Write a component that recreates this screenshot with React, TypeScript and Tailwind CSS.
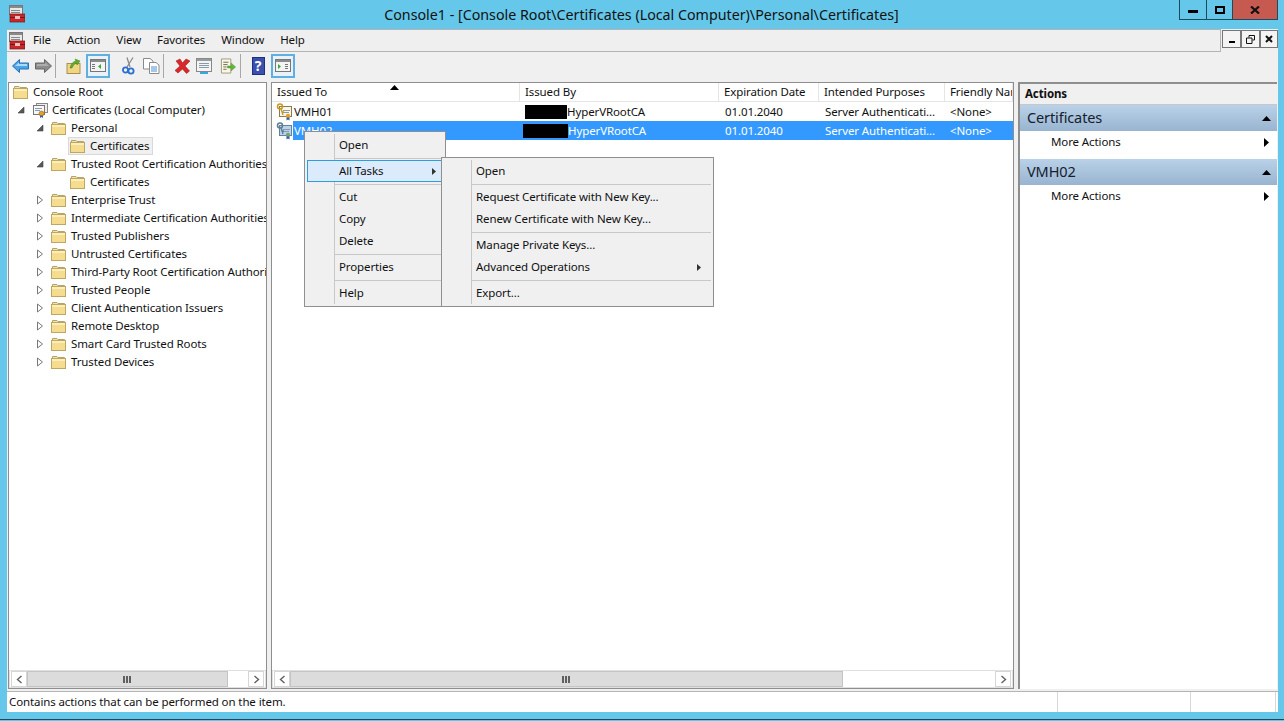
import type { ReactNode } from "react";

const treeRows = [
  { label: "Console Root", level: 0, arrow: "", icon: "folder" },
  { label: "Certificates (Local Computer)", level: 1, arrow: "open", icon: "cert" },
  { label: "Personal", level: 2, arrow: "open", icon: "folder" },
  { label: "Certificates", level: 3, arrow: "", icon: "folder", selected: true },
  { label: "Trusted Root Certification Authorities", level: 2, arrow: "open", icon: "folder" },
  { label: "Certificates", level: 3, arrow: "", icon: "folder" },
  { label: "Enterprise Trust", level: 2, arrow: "closed", icon: "folder" },
  { label: "Intermediate Certification Authorities", level: 2, arrow: "closed", icon: "folder" },
  { label: "Trusted Publishers", level: 2, arrow: "closed", icon: "folder" },
  { label: "Untrusted Certificates", level: 2, arrow: "closed", icon: "folder" },
  { label: "Third-Party Root Certification Authorities", level: 2, arrow: "closed", icon: "folder" },
  { label: "Trusted People", level: 2, arrow: "closed", icon: "folder" },
  { label: "Client Authentication Issuers", level: 2, arrow: "closed", icon: "folder" },
  { label: "Remote Desktop", level: 2, arrow: "closed", icon: "folder" },
  { label: "Smart Card Trusted Roots", level: 2, arrow: "closed", icon: "folder" },
  { label: "Trusted Devices", level: 2, arrow: "closed", icon: "folder" },
];

const menuItems = ["File", "Action", "View", "Favorites", "Window", "Help"];

function ToolboxIcon() {
  return (
    <svg width="16" height="18" viewBox="0 0 16 18" className="shrink-0">
      <rect x="0.5" y="0.5" width="13" height="9" fill="#e8e8e8" stroke="#777" />
      <rect x="1" y="1" width="12" height="2" fill="#8a8a8a" />
      <rect x="2" y="5" width="9" height="1" fill="#888" />
      <rect x="2" y="7" width="9" height="1" fill="#888" />
      <rect x="1" y="9" width="15" height="8" fill="#c8282a" stroke="#7c1515" strokeWidth="0.7" />
      <rect x="1" y="12" width="15" height="1" fill="#7c1515" />
      <rect x="6" y="11" width="5" height="3" fill="#eac0c0" />
    </svg>
  );
}

function FolderIcon() {
  return (
    <svg width="15" height="14" viewBox="0 0 15 14" className="shrink-0">
      <path d="M1.5 3.5V1.5H6L7 2.5H13.5V3.5Z" fill="#f3e3a8" stroke="#b5a36a" />
      <rect x="0.5" y="3.5" width="14" height="10" fill="#f6dc8f" stroke="#bda765" />
      <rect x="1" y="4" width="13" height="2" fill="#fbeebb" />
    </svg>
  );
}

function CertIcon({ size = 16, muted = false }: { size?: number; muted?: boolean }) {
  return (
    <svg width={size} height={size} viewBox="0 0 16 16" className="shrink-0">
      <rect x="4.5" y="1.5" width="11" height="9" fill="#eee" stroke="#888" />
      <rect x="1.5" y="3.5" width="11" height="9" fill={muted ? "#d5e4f2" : "#f8f8f8"} stroke="#777" />
      <rect x="3" y="6" width="7" height="1" fill="#7a9cc0" />
      <rect x="3" y="8" width="5" height="1" fill="#7a9cc0" />
      <circle cx="9.5" cy="11.5" r="2.5" fill="#e8a020" stroke="#a86a10" strokeWidth="0.6" />
      <path d="M8 13.5V16L9.5 15L11 16V13.5Z" fill="#2f5fb0" />
    </svg>
  );
}

function KeyCertIcon({ selected = false }: { selected?: boolean }) {
  return (
    <svg width="17" height="18" viewBox="0 0 17 18" className="shrink-0">
      <rect x="3.5" y="3.5" width="12" height="10" fill={selected ? "#b9d3ea" : "#fbf6e6"} stroke={selected ? "#66809a" : "#8b7a50"} />
      <rect x="7" y="7" width="7" height="1" fill="#8a9ab0" />
      <rect x="7" y="9" width="6" height="1" fill="#8a9ab0" />
      <circle cx="4" cy="3.5" r="2.5" fill="none" stroke={selected ? "#5d7f96" : "#c99a22"} strokeWidth="1.5" />
      <path d="M5 5.5L7 12M6 9H8" stroke={selected ? "#5d7f96" : "#c99a22"} strokeWidth="1.4" fill="none" />
      <circle cx="12" cy="13" r="2.2" fill={selected ? "#7f9f70" : "#e8a020"} />
      <path d="M10.5 14.5V17.5L12 16.5L13.5 17.5V14.5Z" fill="#2f5fb0" />
    </svg>
  );
}

function Expander({ kind }: { kind: string }) {
  if (kind === "open") {
    return (
      <svg width="8" height="8" viewBox="0 0 8 8">
        <path d="M7 1V7H1Z" fill="#595959" stroke="#444" strokeWidth="0.6" />
      </svg>
    );
  }
  if (kind === "closed") {
    return (
      <svg width="8" height="10" viewBox="0 0 8 10">
        <path d="M1.5 1L6.5 5L1.5 9Z" fill="#fff" stroke="#777" />
      </svg>
    );
  }
  return null;
}

function TreeRow({ label, level, arrow, icon, selected }: {
  label: string;
  level: number;
  arrow: string;
  icon: string;
  selected?: boolean;
}) {
  return (
    <div className="flex h-[18px] items-center whitespace-nowrap" style={{ paddingLeft: 2 + Math.max(level - 1, 0) * 19 }}>
      {level > 0 ? (
        <span className="flex w-[19px] shrink-0 items-center justify-center">
          <Expander kind={arrow} />
        </span>
      ) : null}
      <span
        className={`flex h-[18px] shrink-0 items-center border pl-[1px] pr-[3px] ${
          selected ? "border-[#d9d9d9] bg-[#f0f0f0]" : "border-transparent"
        } ${icon === "cert" ? "gap-[4px]" : "gap-[5px]"}`}
      >
        {icon === "cert" ? <CertIcon /> : <FolderIcon />}
        <span>{label}</span>
      </span>
    </div>
  );
}

function ScrollArrow({ right = false }: { right?: boolean }) {
  return (
    <span className="flex h-[16px] w-[16px] shrink-0 items-center justify-center border border-[#d6d6d6] bg-white">
      <svg width="7" height="9" viewBox="0 0 7 9">
        <path d={right ? "M1.5 1L5.5 4.5L1.5 8" : "M5.5 1L1.5 4.5L5.5 8"} fill="none" stroke="#606060" strokeWidth="1.4" />
      </svg>
    </span>
  );
}

function Grip() {
  return (
    <span className="flex -translate-x-[1px] gap-[1px]">
      <span className="h-[7px] w-[2px] bg-[#606060]" />
      <span className="h-[7px] w-[2px] bg-[#606060]" />
      <span className="h-[7px] w-[2px] bg-[#606060]" />
    </span>
  );
}

function HScrollBar({ thumb }: { thumb: string }) {
  return (
    <div className="flex h-[18px] shrink-0 items-center border border-[#e0e0e0] bg-white px-[1px]">
      <ScrollArrow />
      <div className="flex h-[16px] min-w-0 flex-1">
        <div className={`${thumb} flex h-full items-center justify-center border border-[#c4c4c4] bg-[#dcdcdc]`}>
          <Grip />
        </div>
      </div>
      <ScrollArrow right />
    </div>
  );
}

function ToolSlot({ width, active, children }: { width: string; active?: boolean; children: ReactNode }) {
  return (
    <span
      className={`${width} flex h-[24px] shrink-0 items-center justify-center ${
        active ? "border-2 border-[#5fb0e0] bg-[#e9f2fa]" : ""
      }`}
    >
      {children}
    </span>
  );
}

function ToolSep() {
  return <span className="h-[24px] w-[1px] shrink-0 bg-[#a8a8a8]" />;
}

function Toolbar() {
  return (
    <div className="flex h-[30px] shrink-0 items-center bg-[#f0f0f0] pb-[3px] pl-[2px]">
      <ToolSlot width="w-[22px]">
        <svg width="17" height="14" viewBox="0 0 17 14">
          <path d="M7.5 0.5L0.5 7L7.5 13.5V10H16.5V4H7.5Z" fill="#4aa4e8" stroke="#2a70b0" />
          <path d="M3 7L7 3.5V5H15V7Z" fill="#a6dcff" />
        </svg>
      </ToolSlot>
      <ToolSlot width="w-[24px]">
        <svg width="17" height="14" viewBox="0 0 17 14">
          <path d="M9.5 0.5L16.5 7L9.5 13.5V10H0.5V4H9.5Z" fill="#8c8c8c" stroke="#666" />
          <path d="M2 5H10V3.5L14 7H2Z" fill="#adadad" />
        </svg>
      </ToolSlot>
      <ToolSep />
      <span className="w-[9px] shrink-0" />
      <ToolSlot width="w-[18px]">
        <svg width="16" height="16" viewBox="0 0 16 16">
          <rect x="1" y="5.5" width="13" height="10" fill="#f2d583" stroke="#a89050" />
          <path d="M4 10C5 6 7 3.5 10 3L9 1L14 3L11 7L10.5 5C8.5 5.5 7 7.5 6 10Z" fill="#5fae2c" stroke="#3d7a18" strokeWidth="0.5" />
        </svg>
      </ToolSlot>
      <span className="w-[3px] shrink-0" />
      <ToolSlot width="w-[24px]" active>
        <svg width="16" height="13" viewBox="0 0 16 13">
          <rect x="0.5" y="0.5" width="15" height="12" fill="#f4f4f4" stroke="#777" />
          <rect x="1" y="1" width="14" height="2" fill="#8b8b8b" />
          <rect x="2" y="5" width="3" height="1" fill="#777" />
          <rect x="2" y="7" width="3" height="1" fill="#777" />
          <rect x="2" y="9" width="3" height="1" fill="#777" />
          <path d="M11 5V10L8 7.5Z" fill="#3aa83a" />
        </svg>
      </ToolSlot>
      <span className="w-[8px] shrink-0" />
      <ToolSlot width="w-[20px]">
        <svg width="13" height="18" viewBox="0 0 13 18">
          <path d="M11 0.5L5 10M5 0.5L8 10" stroke="#8a8a8a" strokeWidth="1.3" fill="none" />
          <circle cx="3.5" cy="13" r="2.6" fill="none" stroke="#2a70d0" strokeWidth="1.8" />
          <circle cx="9" cy="14" r="2.6" fill="none" stroke="#2a70d0" strokeWidth="1.8" />
        </svg>
      </ToolSlot>
      <span className="w-[3px] shrink-0" />
      <ToolSlot width="w-[20px]">
        <svg width="17" height="16" viewBox="0 0 17 16">
          <path d="M0.5 0.5H7L10 3V11H0.5Z" fill="#fff" stroke="#8a8a8a" />
          <path d="M6.5 4.5H13L16 7V15.5H6.5Z" fill="#fff" stroke="#8a8a8a" />
          <path d="M8 9H14M8 11H14M8 13H14" stroke="#4a90d0" />
        </svg>
      </ToolSlot>
      <span className="w-[2px] shrink-0" />
      <ToolSep />
      <span className="w-[8px] shrink-0" />
      <ToolSlot width="w-[20px]">
        <svg width="17" height="16" viewBox="0 0 17 16">
          <path d="M2 3L6 1L8.5 5L12 1L16 3L11 8L15.5 13L12.5 15.5L8.5 11L4 15L1 12.5L6 8Z" fill="#d8282a" stroke="#a81c1e" strokeWidth="0.6" />
        </svg>
      </ToolSlot>
      <span className="w-[4px] shrink-0" />
      <ToolSlot width="w-[16px]">
        <svg width="16" height="16" viewBox="0 0 16 16">
          <rect x="0.5" y="0.5" width="15" height="13" fill="#f4f4f4" stroke="#888" />
          <rect x="1" y="1" width="14" height="2" fill="#9a9a9a" />
          <path d="M3 5.5H13M3 7.5H13M3 9.5H13" stroke="#8899aa" />
          <rect x="4" y="14" width="8" height="2" fill="#3aa8e0" />
        </svg>
      </ToolSlot>
      <span className="w-[8px] shrink-0" />
      <ToolSlot width="w-[16px]">
        <svg width="17" height="16" viewBox="0 0 17 16">
          <path d="M1.5 0.5H11.5V15.5H1.5Z" fill="#fbf6df" stroke="#9a9a80" />
          <path d="M3.5 4H9M3.5 6.5H8M3.5 9H7M3.5 11.5H7" stroke="#666" />
          <path d="M8 8H12V5L16.5 9L12 13V10H8Z" fill="#62b83a" stroke="#3f8a20" strokeWidth="0.5" />
        </svg>
      </ToolSlot>
      <span className="w-[4px] shrink-0" />
      <ToolSep />
      <span className="w-[10px] shrink-0" />
      <ToolSlot width="w-[14px]">
        <span className="flex h-[18px] w-[13px] items-center justify-center border border-[#1d2f80] bg-[#3b4fb0] text-[14px] font-bold leading-none text-white">
          ?
        </span>
      </ToolSlot>
      <span className="w-[6px] shrink-0" />
      <ToolSlot width="w-[24px]" active>
        <svg width="16" height="13" viewBox="0 0 16 13">
          <rect x="0.5" y="0.5" width="15" height="12" fill="#f4f4f4" stroke="#777" />
          <rect x="1" y="1" width="14" height="2" fill="#8b8b8b" />
          <path d="M3 5V10L6 7.5Z" fill="#3aa83a" />
          <rect x="10" y="5" width="3" height="1" fill="#777" />
          <rect x="10" y="7" width="3" height="1" fill="#777" />
          <rect x="10" y="9" width="3" height="1" fill="#777" />
        </svg>
      </ToolSlot>
    </div>
  );
}

function Tri({ up = false }: { up?: boolean }) {
  return up ? (
    <svg width="9" height="5" viewBox="0 0 9 5">
      <path d="M4.5 0L9 5H0Z" fill="#000" />
    </svg>
  ) : (
    <svg width="4" height="7" viewBox="0 0 4 7">
      <path d="M0 0L4 3.5L0 7Z" fill="#333" />
    </svg>
  );
}

function ColHead({ width, children }: { width: string; children: ReactNode }) {
  return (
    <div className={`${width} relative flex h-full shrink-0 items-center overflow-hidden whitespace-nowrap border-r border-[#e5e5e5] pl-[5px]`}>
      {children}
    </div>
  );
}

function ListRow({ name, selected, blackLeft, blackWidth }: {
  name: string;
  selected?: boolean;
  blackLeft: string;
  blackWidth: string;
}) {
  const textClass = selected ? "text-white" : "text-[#111]";
  return (
    <div className="flex h-[19px] items-center whitespace-nowrap">
      <span className="flex w-[21px] shrink-0 justify-center pl-[3px]">
        <KeyCertIcon selected={selected} />
      </span>
      <div className={`flex h-full flex-1 items-center ${selected ? "bg-[#3399ff]" : ""} ${textClass}`}>
        <span className="w-[227px] shrink-0 pl-[1px]">{name}</span>
        <span className="flex w-[199px] shrink-0 items-center">
          <span className={`${blackLeft} ${blackWidth} h-[14px] shrink-0 bg-black`} />
          <span>HyperVRootCA</span>
        </span>
        <span className="w-[100px] shrink-0 pl-[6px]">01.01.2040</span>
        <span className="w-[125px] shrink-0 pl-[6px]">Server Authenticati...</span>
        <span className="pl-[6px]">&lt;None&gt;</span>
      </div>
    </div>
  );
}

function ActionBand({ title }: { title: string }) {
  return (
    <div className="flex h-[26px] items-center justify-between bg-gradient-to-b from-[#b9d2e9] to-[#99b4d0] pl-[7px] pr-[6px] text-[14.5px] text-[#14202c]">
      <span>{title}</span>
      <Tri up />
    </div>
  );
}

function ActionRow() {
  return (
    <div className="flex h-[22px] items-center justify-between pl-[31px] pr-[8px]">
      <span>More Actions</span>
      <svg width="5" height="9" viewBox="0 0 5 9">
        <path d="M0 0L5 4.5L0 9Z" fill="#000" />
      </svg>
    </div>
  );
}

function MenuRow({ label, sub, active }: { label: string; sub?: boolean; active?: boolean }) {
  return (
    <div
      className={`flex h-[22px] items-center justify-between ${
        active ? "relative border border-[#2a9fe0] bg-[#dcebfc] pl-[31px] pr-[6px]" : "pl-[32px] pr-[10px]"
      }`}
    >
      <span>{label}</span>
      {sub ? <Tri /> : null}
    </div>
  );
}

function MenuSep() {
  return (
    <div className="ml-[28px] flex h-[4px] items-center">
      <div className="h-[1px] w-full bg-[#c8c8c8]" />
    </div>
  );
}

function ContextMenu() {
  return (
    <>
      <div className="absolute left-[304px] top-[131px] w-[142px] border border-[#8f8f8f] bg-[#f0f0f0] p-[2px]">
        <div className="absolute bottom-[2px] left-[29px] top-[2px] w-[1px] bg-[#c8c8c8]" />
        <MenuRow label="Open" />
        <MenuSep />
        <MenuRow label="All Tasks" sub active />
        <MenuSep />
        <MenuRow label="Cut" />
        <MenuRow label="Copy" />
        <MenuRow label="Delete" />
        <MenuSep />
        <MenuRow label="Properties" />
        <MenuSep />
        <MenuRow label="Help" />
      </div>
      <div className="absolute left-[441px] top-[157px] w-[273px] border border-[#8f8f8f] bg-[#f0f0f0] p-[2px]">
        <div className="absolute bottom-[2px] left-[29px] top-[2px] w-[1px] bg-[#c8c8c8]" />
        <MenuRow label="Open" />
        <MenuSep />
        <MenuRow label="Request Certificate with New Key..." />
        <MenuRow label="Renew Certificate with New Key..." />
        <MenuSep />
        <MenuRow label="Manage Private Keys..." />
        <MenuRow label="Advanced Operations" sub />
        <MenuSep />
        <MenuRow label="Export..." />
      </div>
    </>
  );
}

export default function App() {
  return (
    <div className="relative flex h-[721px] w-[1284px] flex-col overflow-hidden bg-[#65c8ea] font-['Noto_Sans',sans-serif] text-[11.5px] tracking-[-0.11px] text-[#111]">
      {/* title bar */}
      <div className="flex h-[29px] shrink-0 items-center justify-center pr-[1px] text-[14.25px] tracking-normal">
        <span className="absolute left-[9px] top-[5px]">
          <ToolboxIcon />
        </span>
        <span>Console1 - [Console Root\Certificates (Local Computer)\Personal\Certificates]</span>
      </div>
      <div className="absolute left-[1179px] top-0 flex h-[20px] w-[99px] border-b border-l border-r border-[#1c4a5e]">
        <span className="flex w-[27px] items-center justify-center border-r border-[#1c4a5e]">
          <span className="h-[3px] w-[10px] translate-y-[2px] bg-black" />
        </span>
        <span className="flex w-[26px] items-center justify-center border-r border-[#1c4a5e]">
          <span className="h-[8px] w-[10px] border-2 border-black" />
        </span>
        <span className="flex flex-1 items-center justify-center bg-[#c75a50]">
          <svg width="10" height="8" viewBox="0 0 10 8">
            <path d="M1 0.5L9 7.5M9 0.5L1 7.5" stroke="#111" strokeWidth="2.2" />
          </svg>
        </span>
      </div>

      {/* client area */}
      <div className="ml-[7px] mr-[6px] flex h-[683px] shrink-0 flex-col border-b-2 border-[#a0a0a0] bg-[#f0f0f0]">
        <div className="flex h-[23px] shrink-0">
          <div className="flex h-[23px] flex-1 items-center border-r border-b border-t border-[#b4b4b4] bg-[#efefef]">
            <span className="ml-[2px] mr-[3px] flex">
              <ToolboxIcon />
            </span>
            {menuItems.map((item, i) => (
              <span key={item} className={`-translate-y-[1px] ${i === 0 ? "pl-[5px] pr-[8px]" : "px-[8px]"}`}>
                {item}
              </span>
            ))}
          </div>
          <div className="flex h-[19px] w-[57px] shrink-0 items-start pl-[1px] pt-[1px]">
            <span className="flex h-[18px] w-[19px] items-center justify-center border border-[#777] bg-[#f4f4f4]">
              <span className="mt-[6px] h-[2px] w-[6px] bg-black" />
            </span>
            <span className="flex h-[18px] w-[19px] items-center justify-center border border-[#777] bg-[#f4f4f4]">
              <svg width="9" height="9" viewBox="0 0 9 9">
                <path d="M3 2.5V0.5H8.5V5H6.5M0.5 3H6V8.5H0.5Z" fill="none" stroke="#111" />
              </svg>
            </span>
            <span className="flex h-[18px] w-[18px] items-center justify-center border border-[#777] bg-[#f4f4f4]">
              <svg width="8" height="8" viewBox="0 0 8 8">
                <path d="M1 1L7 7M7 1L1 7" stroke="#111" strokeWidth="2" />
              </svg>
            </span>
          </div>
        </div>

        <Toolbar />

        <div className="flex h-[607px] shrink-0 pl-[1px]">
          {/* tree */}
          <div className="flex w-[259px] shrink-0 flex-col border border-[#8e8e8e] bg-white">
            <div className="min-h-0 flex-1 overflow-hidden">
              {treeRows.map((row, i) => (
                <TreeRow key={i} {...row} />
              ))}
            </div>
            <HScrollBar thumb="w-[201px]" />
          </div>
          <div className="w-[4px] shrink-0" />
          {/* list */}
          <div className="flex w-[743px] shrink-0 flex-col border border-[#8e8e8e] bg-white">
            <div className="flex h-[19px] shrink-0 border-b border-[#e5e5e5]">
              <ColHead width="w-[248px]">
                Issued To
                <span className="absolute left-[118px] top-[2px] flex">
                  <Tri up />
                </span>
              </ColHead>
              <ColHead width="w-[199px]">Issued By</ColHead>
              <ColHead width="w-[100px]">Expiration Date</ColHead>
              <ColHead width="w-[126px]">Intended Purposes</ColHead>
              <ColHead width="w-[68px]">Friendly Name</ColHead>
            </div>
            <ListRow name="VMH01" blackLeft="ml-[5px]" blackWidth="w-[42px]" />
            <ListRow name="VMH02" selected blackLeft="ml-[3px]" blackWidth="w-[45px]" />
            <div className="min-h-0 flex-1" />
            <HScrollBar thumb="w-[553px]" />
          </div>
          <div className="w-[4px] shrink-0" />
          {/* actions */}
          <div className="flex w-[259px] shrink-0 flex-col border-l-2 border-t-2 border-[#8e8e8e] bg-white">
            <div className="flex h-[21px] shrink-0 items-center border-b border-[#c8c8c8] bg-[#f0f0f0] pl-[5px] font-bold">
              Actions
            </div>
            <ActionBand title="Certificates" />
            <ActionRow />
            <div className="h-[6px]" />
            <ActionBand title="VMH02" />
            <ActionRow />
          </div>
        </div>

        <div className="mt-[2px] flex h-[21px] shrink-0 items-center border-t border-[#b4b4b4] bg-white">
          <span className="w-[1050px] shrink-0 pl-[2px]">Contains actions that can be performed on the item.</span>
          <span className="h-full w-[133px] shrink-0 border-l border-[#d8d8d8]" />
          <span className="h-full w-[86px] shrink-0 border-l border-r border-[#d8d8d8]" />
        </div>
      </div>

      <div className="absolute bottom-[1px] left-0 h-[1px] w-full bg-[#1c4a5e]" />
      <ContextMenu />
    </div>
  );
}
